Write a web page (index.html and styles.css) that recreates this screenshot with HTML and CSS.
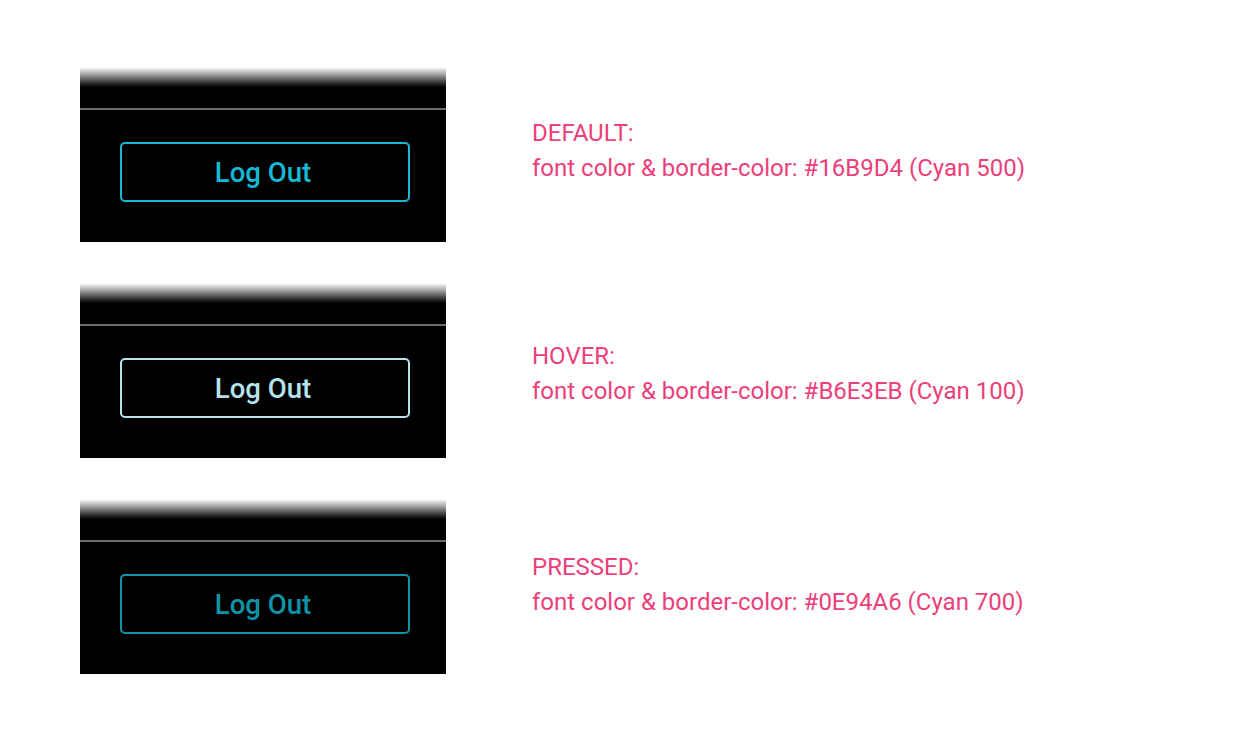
FILE: index.html
```html
<!DOCTYPE html>
<html lang="en">
<head>
<meta charset="utf-8">
<title>Log Out button states</title>
<link rel="stylesheet" href="styles.css">
</head>
<body>
<main class="sheet">
  <section class="row">
    <div class="panel">
      <div class="panel-fade"></div>
      <div class="panel-head"></div>
      <div class="panel-body">
        <button class="logout logout--default" type="button">Log Out</button>
      </div>
    </div>
    <div class="note note--default">
      <p>DEFAULT:</p>
      <p>font color &amp; border-color: #16B9D4 (Cyan 500)</p>
    </div>
  </section>
  <section class="row">
    <div class="panel">
      <div class="panel-fade"></div>
      <div class="panel-head"></div>
      <div class="panel-body">
        <button class="logout logout--hover" type="button">Log Out</button>
      </div>
    </div>
    <div class="note note--hover">
      <p>HOVER:</p>
      <p>font color &amp; border-color: #B6E3EB (Cyan 100)</p>
    </div>
  </section>
  <section class="row">
    <div class="panel">
      <div class="panel-fade"></div>
      <div class="panel-head"></div>
      <div class="panel-body">
        <button class="logout logout--pressed" type="button">Log Out</button>
      </div>
    </div>
    <div class="note note--pressed">
      <p>PRESSED:</p>
      <p>font color &amp; border-color: #0E94A6 (Cyan 700)</p>
    </div>
  </section>
</main>
</body>
</html>
```

FILE: styles.css
```css
* { box-sizing: border-box; }

html, body {
  margin: 0;
  padding: 0;
  background: #ffffff;
}

body {
  font-family: Roboto, "Liberation Sans", sans-serif;
}

.sheet {
  display: flex;
  flex-direction: column;
  gap: 41px;
  padding: 67px 0 0 80px;
}

.row {
  display: flex;
  align-items: center;
  gap: 86px;
  height: 175px;
}

.panel {
  width: 366px;
  height: 175px;
  display: flex;
  flex-direction: column;
  background: #000000;
}

.panel-fade {
  height: 20px;
  background: linear-gradient(to bottom, #ffffff 0%, #b5b5b5 30%, #4a4a4a 70%, #000000 100%);
}

.panel-head {
  height: 21px;
  border-bottom: 2px solid #6c6c6c;
  box-sizing: content-box;
}

.panel-body {
  flex: 1;
  padding: 32px 36px 0 40px;
}

.logout {
  display: block;
  width: 290px;
  height: 60px;
  border: 2px solid currentColor;
  border-radius: 5px;
  background: transparent;
  font-family: Roboto, "Liberation Sans", sans-serif;
  font-weight: 500;
  font-size: 27.5px;
  padding: 0 4px 0 0;
  cursor: pointer;
}

.logout--default { color: #16B9D4; }
.logout--hover { color: #B6E3EB; }
.logout--pressed { color: #0E94A6; }

.note {
  color: #EC407A;
  font-size: 24px;
  line-height: 35px;
}

.note--default { padding-bottom: 8px; }
.note--hover { padding-top: 6px; }
.note--pressed { padding-bottom: 4px; }

.note p {
  margin: 0;
}
```
